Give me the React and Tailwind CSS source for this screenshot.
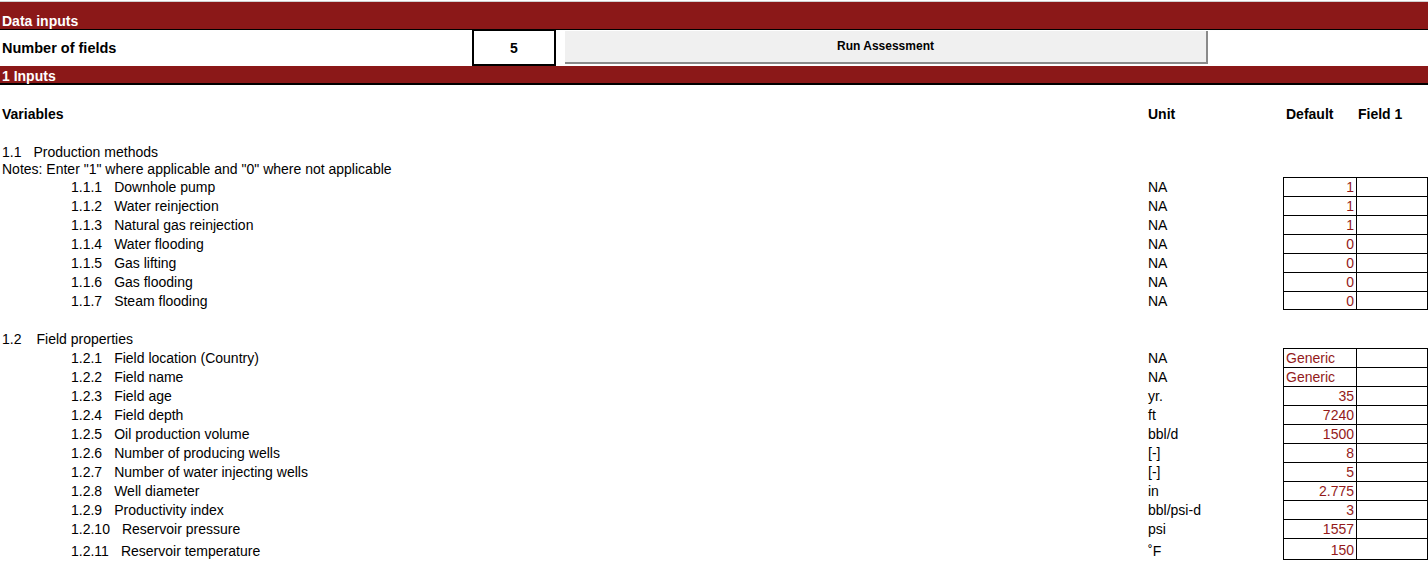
import React from 'react';

const VAL = 'text-[#931a1a]';

const methods = [
  ['1.1.1', 'Downhole pump', 'NA', '1'],
  ['1.1.2', 'Water reinjection', 'NA', '1'],
  ['1.1.3', 'Natural gas reinjection', 'NA', '1'],
  ['1.1.4', 'Water flooding', 'NA', '0'],
  ['1.1.5', 'Gas lifting', 'NA', '0'],
  ['1.1.6', 'Gas flooding', 'NA', '0'],
  ['1.1.7', 'Steam flooding', 'NA', '0'],
];

const props = [
  ['1.2.1', 'Field location (Country)', 'NA', 'Generic', true],
  ['1.2.2', 'Field name', 'NA', 'Generic', true],
  ['1.2.3', 'Field age', 'yr.', '35'],
  ['1.2.4', 'Field depth', 'ft', '7240'],
  ['1.2.5', 'Oil production volume', 'bbl/d', '1500'],
  ['1.2.6', 'Number of producing wells', '[-]', '8'],
  ['1.2.7', 'Number of water injecting wells', '[-]', '5'],
  ['1.2.8', 'Well diameter', 'in', '2.775'],
  ['1.2.9', 'Productivity index', 'bbl/psi-d', '3'],
  ['1.2.10', 'Reservoir pressure', 'psi', '1557'],
  ['1.2.11', 'Reservoir temperature', '˚F', '150'],
];

// one spreadsheet line: label area, unit column, default + field 1 cells
const Row = ({ h = 'h-[19px]', children, unit, def, left, last, bottom }) => {
  const v = bottom ? 'items-end pb-[1px]' : 'items-center';
  return (
    <div className={`flex ${h}`}>
      <div className={`w-[1148px] h-full flex ${v}`}>{children}</div>
      <div className={`w-[135px] h-full flex ${v}`}>{unit}</div>
      {def !== undefined ? (
        <>
          <div className={`w-[73px] h-full border-l border-t border-black flex ${v} ${left ? 'justify-start pl-[2px]' : 'justify-end pr-[2px]'} ${last ? 'border-b' : ''} ${VAL}`}>
            {def}
          </div>
          <div className={`w-[72px] h-full border-l border-r border-t border-black ${last ? 'border-b' : ''}`} />
        </>
      ) : (
        <div className="w-[145px]" />
      )}
    </div>
  );
};

const Item = ({ num, label }) => (
  <div className="pl-[71px] flex">
    <span className="mr-[12px]">{num}</span>
    <span>{label}</span>
  </div>
);

export default function App() {
  return (
    <div className="w-[1428px] h-[580px] bg-white text-black text-[14px] leading-[16px] overflow-hidden" style={{ fontFamily: '"Liberation Sans", Arial, sans-serif' }}>
      <div className="h-[2px] border-b border-[#d0d0d0] bg-white" />
      <div className="h-[28px] bg-[#8b1818] border-b border-black flex items-end pl-[2px] text-white font-bold">
        Data inputs
      </div>
      <div className="h-[36px] flex items-center">
        <div className="w-[472px] pl-[2px] font-bold text-[14.5px]">Number of fields</div>
        <div className="w-[84px] h-[37px] -mt-[1px] border-2 border-black flex items-center justify-center font-bold">5</div>
        <div className="w-[9px]" />
        <button className="w-[643px] h-[33px] -mt-[2px] bg-[#f0f0f0] border-r-2 border-b-2 border-[#8a8a8a] flex items-center justify-center text-[12px] font-bold">
          Run Assessment
        </button>
      </div>
      <div className="h-[19px] bg-[#8b1818] border-b-2 border-black flex items-center pt-[2px] pl-[2px] text-white font-bold">
        1 Inputs
      </div>

      <Row />
      <div className="h-[19px] flex items-center font-bold">
        <div className="w-[1148px] pl-[2px]">Variables</div>
        <div className="w-[138px]">Unit</div>
        <div className="w-[72px]">Default</div>
        <div>Field 1</div>
      </div>
      <Row />
      <Row>
        <div className="pl-[2px] flex">
          <span className="mr-[12px]">1.1</span>
          <span>Production methods</span>
        </div>
      </Row>
      <Row h="h-[16px]">
        <div className="pl-[2px]">Notes: Enter "1" where applicable and "0" where not applicable</div>
      </Row>
      {methods.map(([n, l, u, d], i) => (
        <Row key={n} unit={u} def={d} last={i === methods.length - 1}>
          <Item num={n} label={l} />
        </Row>
      ))}
      <Row />
      <Row>
        <div className="pl-[2px] flex">
          <span className="mr-[15px]">1.2</span>
          <span>Field properties</span>
        </div>
      </Row>
      {props.map(([n, l, u, d, left], i) => (
        <Row
          key={n}
          h={i === props.length - 1 ? 'h-[22px]' : 'h-[19px]'}
          bottom={i === props.length - 1}
          unit={u}
          def={d}
          left={left}
          last={i === props.length - 1}
        >
          <Item num={n} label={l} />
        </Row>
      ))}
    </div>
  );
}
